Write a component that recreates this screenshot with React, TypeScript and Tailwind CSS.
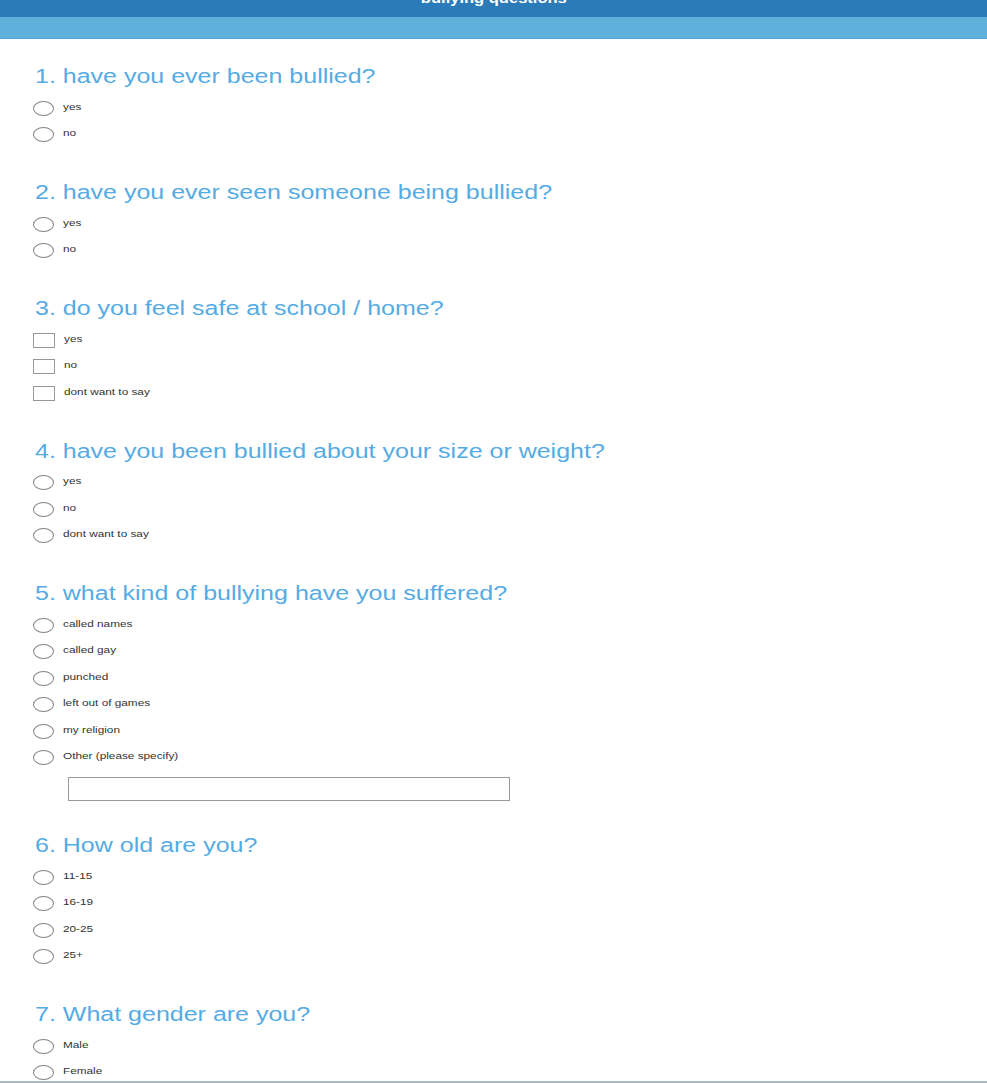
import React from "react";

type Q = { title: string; kind: "radio" | "check"; options: string[]; other?: boolean };

const questions: Q[] = [
  { title: "1. have you ever been bullied?", kind: "radio", options: ["yes", "no"] },
  { title: "2. have you ever seen someone being bullied?", kind: "radio", options: ["yes", "no"] },
  { title: "3. do you feel safe at school / home?", kind: "check", options: ["yes", "no", "dont want to say"] },
  { title: "4. have you been bullied about your size or weight?", kind: "radio", options: ["yes", "no", "dont want to say"] },
  {
    title: "5. what kind of bullying have you suffered?",
    kind: "radio",
    options: ["called names", "called gay", "punched", "left out of games", "my religion", "Other (please specify)"],
    other: true,
  },
  { title: "6. How old are you?", kind: "radio", options: ["11-15", "16-19", "20-25", "25+"] },
  { title: "7. What gender are you?", kind: "radio", options: ["Male", "Female"] },
];

function Option({ kind, label }: { kind: "radio" | "check"; label: string }) {
  return (
    <div className="flex items-center h-[26.5px]">
      {kind === "radio" ? (
        <span className="block w-[21px] h-[15px] rounded-[50%] border border-[#858585] bg-white shrink-0" />
      ) : (
        <span className="block w-[22px] h-[15px] border border-[#979797] bg-white shrink-0" />
      )}
      <span className="ml-[9px] inline-block origin-left scale-x-[1.24] text-[9.5px] leading-none text-[#333333] -mt-[4px] whitespace-nowrap">
        {label}
      </span>
    </div>
  );
}

export default function App() {
  return (
    <div
      className="w-[987px] h-[1083px] bg-white overflow-hidden flex flex-col"
      style={{ fontFamily: '"Liberation Sans", Arial, sans-serif' }}
    >
      <div className="h-[1081px] overflow-hidden flex flex-col">
        <div className="h-[17px] bg-[#2b7bb9] overflow-hidden flex justify-center shrink-0">
          <span className="inline-block origin-center scale-x-[1.18] text-[14px] font-bold text-white leading-[14px] -mt-[9px] whitespace-nowrap">
            bullying questions
          </span>
        </div>
        <div className="h-[21px] bg-[#5fb1dc] shrink-0" />
        <div className="h-[1px] bg-[#55a8d6] shrink-0" />
        <div className="pt-[25px] pl-[33px] flex flex-col gap-[32px]">
          {questions.map((q, i) => (
            <div key={i} className="flex flex-col">
              <div className="h-[24px] leading-[24px] ml-[2px]">
                <span className="inline-block origin-left scale-x-[1.25] text-[20px] text-[#55abe3] whitespace-nowrap">
                  {q.title}
                </span>
              </div>
              <div className="mt-[7px] flex flex-col">
                {q.options.map((o, j) => (
                  <Option key={j} kind={q.kind} label={o} />
                ))}
              </div>
              {q.other && (
                <div className="mt-[6px] ml-[35px] w-[442px] h-[24px] border border-[#9a9a9a] bg-white" />
              )}
            </div>
          ))}
        </div>
      </div>
      <div className="h-[2px] bg-[#aeb6bd] shrink-0" />
    </div>
  );
}
